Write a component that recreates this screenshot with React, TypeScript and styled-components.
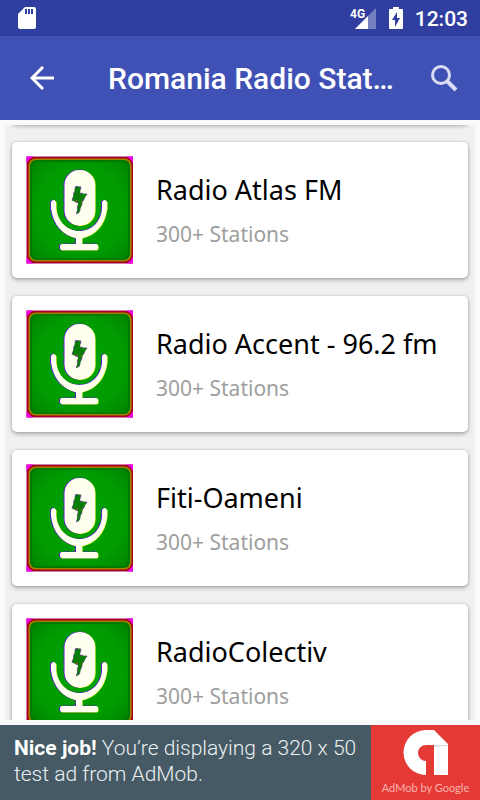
import React from "react";
import styled, { createGlobalStyle } from "styled-components";

const GlobalStyle = createGlobalStyle`
  *, *::before, *::after { box-sizing: border-box; }
  body { margin: 0; background: #fafafa; font-family: Roboto, "Noto Sans", sans-serif; }
`;

const Screen = styled.div`
  display: flex;
  flex-direction: column;
  height: 100vh;
  overflow: hidden;
`;

const StatusBar = styled.div`
  display: flex;
  flex: none;
  align-items: center;
  height: 36px;
  padding: 0 12px 0 18px;
  background: #303f9f;
  color: #fff;
`;

const StatusIcons = styled.div`
  display: flex;
  align-items: center;
  gap: 12px;
  margin-left: auto;
`;

const Clock = styled.time`
  padding-top: 2px;
  font-size: 21px;
  line-height: 34px;
  font-weight: 500;
`;

const AppBar = styled.header`
  display: flex;
  flex: none;
  align-items: center;
  height: 84px;
  padding: 0 12px 0 18px;
  background: #3f51b5;
  color: #fff;
`;

const IconButton = styled.button`
  display: flex;
  flex: none;
  align-items: center;
  justify-content: center;
  width: 48px;
  height: 48px;
  padding: 0;
  border: 0;
  background: none;
  color: inherit;
  cursor: pointer;
`;

const AppTitle = styled.h1`
  flex: 1;
  min-width: 0;
  margin: 0 26px 0 42px;
  padding-top: 2px;
  overflow: hidden;
  white-space: nowrap;
  text-overflow: ellipsis;
  font-size: 30px;
  line-height: 40px;
  font-weight: 500;
`;

const StationList = styled.ul`
  display: flex;
  flex: 1;
  flex-direction: column;
  gap: 18px;
  min-height: 0;
  margin: 5px;
  padding: 0 7px;
  overflow-y: auto;
  scrollbar-width: none;
  background: #f0f0f0;
  list-style: none;
`;

const Card = styled.li`
  display: flex;
  flex: none;
  align-items: center;
  gap: 23px;
  height: 136px;
  padding: 0 15px 0 14px;
  border-radius: 5px;
  background: #fff;
  box-shadow: 0 2px 4px rgba(0, 0, 0, 0.28), 0 0 3px rgba(0, 0, 0, 0.16);
`;

const ScrolledCard = styled(Card)`
  height: 12px;
  margin-top: -13px;
`;

const StationText = styled.div`
  min-width: 0;
  padding-top: 2px;
`;

const StationName = styled.h2`
  margin: 0 0 12px;
  font: 400 27px/34px "Noto Sans", sans-serif;
  color: #000;
  white-space: nowrap;
`;

const StationCount = styled.p`
  margin: 0;
  font: 400 21px/30px "Noto Sans", sans-serif;
  color: #9e9e9e;
`;

const AdBanner = styled.a`
  display: flex;
  flex: none;
  height: 75px;
  background: #455a64;
  color: #eceff1;
  text-decoration: none;
`;

const AdText = styled.p`
  flex: 1;
  margin: 0;
  padding: 10px 8px 0 14px;
  font-size: 21px;
  line-height: 26px;
  font-weight: 300;

  strong { color: #fff; font-weight: 700; }
`;

const AdBrand = styled.div`
  display: flex;
  flex: none;
  flex-direction: column;
  align-items: center;
  gap: 4px;
  width: 109px;
  padding-top: 5px;
  background: #e53935;
  color: #f9b4b0;
  font: 400 11px/16px Lato, sans-serif;
  white-space: nowrap;
`;

const SdCardIcon = () => (
  <svg width="18" height="22" viewBox="0 0 18 22" aria-hidden="true">
    <path fill="#fff" d="M7 0h9q2 0 2 2v18q0 2-2 2H2q-2 0-2-2V7z" />
    <path fill="#303f9f" d="M7 2h2v5H7zM10 2h2v5h-2zM13 2h2v5h-2z" />
  </svg>
);

const SignalIcon = () => (
  <svg width="27" height="22" viewBox="0 0 27 22" aria-hidden="true">
    <path fill="#7681c0" d="M26 1v21H5z" />
    <path fill="#fff" d="M18 9v13H5z" />
    <path fill="#303f9f" d="M0 0h14v10l-2 2H0z" />
    <text x="0" y="11" fill="#fff" fontFamily="Liberation Sans Narrow, Roboto, sans-serif" fontSize="12" fontWeight="700">4G</text>
  </svg>
);

const BatteryIcon = () => (
  <svg width="14" height="22" viewBox="0 0 14 22" aria-hidden="true">
    <path fill="#fff" d="M4 0h6v2h3q1 0 1 1v18q0 1-1 1H1q-1 0-1-1V3q0-1 1-1h3z" />
    <path fill="#303f9f" d="M8 5v6h3l-5 9v-7H3z" />
  </svg>
);

const BackIcon = () => (
  <svg width="24" height="24" viewBox="0 0 24 24" fill="none" stroke="#fff" strokeWidth="3" aria-hidden="true">
    <path d="M13 1 2 12l11 11M2 12h22" />
  </svg>
);

const SearchIcon = () => (
  <svg width="28" height="28" viewBox="0 0 28 28" fill="none" stroke="#d9dcf0" strokeWidth="3" aria-hidden="true">
    <circle cx="11" cy="11" r="8.5" />
    <path d="m17 17 9 9" strokeWidth="4" />
  </svg>
);

const micOutline = (
  <>
    <rect x="38.5" y="14" width="30.5" height="55.5" rx="15" />
    <path d="M25 46q2.500-4 5 0v6c1 13 11 23 23.500 23s22-10 22.500-23v-6q2.500-4 5 0v6c-2 17-12 27-25 30v6h14q2 0 2 3t-2 3H36q-2 0-2-3t2-3h14v-6C37 79 27 69 25 52z" />
  </>
);

const StationIcon = () => (
  <svg width="107" height="108" viewBox="0 0 107 108" aria-hidden="true">
    <defs>
      <radialGradient id="tileGreen" cx="50%" cy="50%" r="72%">
        <stop offset="0" stopColor="#00a400" />
        <stop offset=".65" stopColor="#009b00" />
        <stop offset="1" stopColor="#008300" />
      </radialGradient>
    </defs>
    <rect x=".5" y=".5" width="107" height="107" fill="#a80050" />
    <path fill="#f000e8" d="M.5.5H7L.5 7zM107 .5V7l-6.500-6.500zM.5 107.500V101l6.500 6.500zM107 107.500h-6.500L107 101z" />
    <rect x="1.500" y="1.500" width="105" height="105" rx="7" fill="#a00000" />
    <rect x="2.500" y="2.500" width="103" height="103" rx="7" fill="#a88000" />
    <rect x="4" y="4" width="100" height="100" rx="6" fill="#007900" />
    <rect x="6" y="6" width="96" height="96" rx="6" fill="url(#tileGreen)" />
    <g fill="#6a10e8" stroke="#6a10e8" strokeDasharray="6 2" transform="translate(-.5 0)">{micOutline}</g>
    <g fill="#eaff45" transform="translate(.6 .4)">{micOutline}</g>
    <g fill="#fffff0">{micOutline}</g>
    <path fill="#087d08" stroke="#7a20b8" strokeWidth=".7" strokeDasharray="3 3" d="M49.500 30.500H55L54 37l7 1-4 7-4 12-2.500 1L52 47l-6-2.500z" />
    <path stroke="#d34c28" strokeDasharray="2 3" d="m50 45 6 1" />
  </svg>
);

const AdMobLogo = () => (
  <svg width="46" height="46" viewBox="0 0 46 46" aria-hidden="true">
    <path fill="#fff" d="M23 0h8l14 14v31H31V15h-8a8 8 0 0 0 0 16v14A22.500 22.500 0 0 1 23 0z" />
    <path fill="#dedede" d="M31 15h14v1l-14 1z" />
  </svg>
);

const stations = ["Radio Atlas FM", "Radio Accent - 96.2 fm", "Fiti-Oameni", "RadioColectiv"];

export default function App() {
  return (
    <Screen>
      <GlobalStyle />
      <StatusBar>
        <SdCardIcon />
        <StatusIcons>
          <SignalIcon />
          <BatteryIcon />
          <Clock>12:03</Clock>
        </StatusIcons>
      </StatusBar>
      <AppBar>
        <IconButton aria-label="Back"><BackIcon /></IconButton>
        <AppTitle>Romania Radio Stations</AppTitle>
        <IconButton aria-label="Search"><SearchIcon /></IconButton>
      </AppBar>
      <StationList>
        <ScrolledCard aria-hidden="true" />
        {stations.map((name) => (
          <Card key={name}>
            <StationIcon />
            <StationText>
              <StationName>{name}</StationName>
              <StationCount>300+ Stations</StationCount>
            </StationText>
          </Card>
        ))}
      </StationList>
      <AdBanner href="#admob">
        <AdText><strong>Nice job!</strong> You’re displaying a 320 x 50 test ad from AdMob.</AdText>
        <AdBrand>
          <AdMobLogo />
          <span>AdMob by Google</span>
        </AdBrand>
      </AdBanner>
    </Screen>
  );
}
